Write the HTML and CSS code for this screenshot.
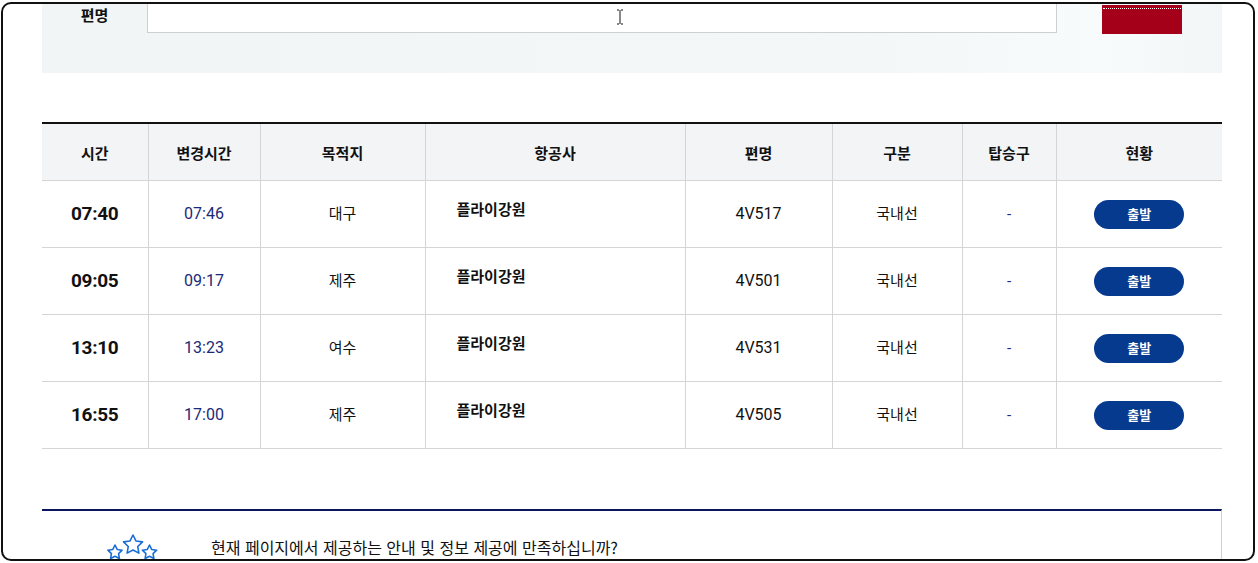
FILE: index.html
```html
<!DOCTYPE html>
<html lang="ko">

<head>
    <meta charset="UTF-8">
    <meta name="viewport" content="width=device-width, initial-scale=1.0">
    <title>출발 운항정보</title>
    <link rel="stylesheet" href="styles.css">
</head>

<body>

    <div class="frame">
        <div class="content">

            <!-- 검색 영역 -->
            <div class="search-box">
                <div class="search-row">
                    <label class="search-label" for="flight-no">편명</label>
                    <input type="text" id="flight-no" class="search-input">
                    <button class="search-btn" type="button"><span class="focus-line"></span></button>
                </div>
            </div>

            <!-- 운항 목록 -->
            <table class="flight-table">
                <colgroup>
                    <col style="width: 106px">
                    <col style="width: 112px">
                    <col style="width: 165px">
                    <col style="width: 260px">
                    <col style="width: 147px">
                    <col style="width: 130px">
                    <col style="width: 94px">
                    <col style="width: 166px">
                </colgroup>
                <thead>
                    <tr>
                        <th>시간</th>
                        <th>변경시간</th>
                        <th>목적지</th>
                        <th>항공사</th>
                        <th>편명</th>
                        <th>구분</th>
                        <th>탑승구</th>
                        <th>현황</th>
                    </tr>
                </thead>
                <tbody>
                    <tr>
                        <td class="time">07:40</td>
                        <td class="changed">07:46</td>
                        <td>대구</td>
                        <td class="airline"><span>플라이강원</span></td>
                        <td class="num">4V517</td>
                        <td>국내선</td>
                        <td class="gate">-</td>
                        <td><span class="status">출발</span></td>
                    </tr>
                    <tr>
                        <td class="time">09:05</td>
                        <td class="changed">09:17</td>
                        <td>제주</td>
                        <td class="airline"><span>플라이강원</span></td>
                        <td class="num">4V501</td>
                        <td>국내선</td>
                        <td class="gate">-</td>
                        <td><span class="status">출발</span></td>
                    </tr>
                    <tr>
                        <td class="time">13:10</td>
                        <td class="changed">13:23</td>
                        <td>여수</td>
                        <td class="airline"><span>플라이강원</span></td>
                        <td class="num">4V531</td>
                        <td>국내선</td>
                        <td class="gate">-</td>
                        <td><span class="status">출발</span></td>
                    </tr>
                    <tr>
                        <td class="time">16:55</td>
                        <td class="changed">17:00</td>
                        <td>제주</td>
                        <td class="airline"><span>플라이강원</span></td>
                        <td class="num">4V505</td>
                        <td>국내선</td>
                        <td class="gate">-</td>
                        <td><span class="status">출발</span></td>
                    </tr>
                </tbody>
            </table>

            <!-- 만족도 조사 -->
            <div class="survey">
                <svg class="survey-icon" width="54" height="28" viewBox="0 0 54 28">
                    <polygon points="27,2 29.94,7.95 36.51,8.91 31.76,13.55 32.88,20.09 27,17 21.12,20.09 22.24,13.55 17.49,8.91 24.06,7.95" />
                    <polygon points="9,12 11.2,16.47 16.13,17.18 12.57,20.66 13.41,25.57 9,23.25 4.59,25.57 5.43,20.66 1.87,17.18 6.8,16.47" />
                    <polygon points="43.5,12 45.7,16.47 50.63,17.18 47.07,20.66 47.91,25.57 43.5,23.25 39.09,25.57 39.93,20.66 36.37,17.18 41.3,16.47" />
                </svg>
                <p class="survey-text">현재 페이지에서 제공하는 안내 및 정보 제공에 만족하십니까?</p>
            </div>

        </div>

        <!-- 마우스 커서 -->
        <svg class="cursor" width="8" height="16" viewBox="0 0 8 16">
            <path d="M1 1h2M5 1h2M4 1v14M1 15h2M5 15h2" stroke="#111" stroke-width="1" fill="none" />
        </svg>
    </div>

</body>

</html>
```

FILE: styles.css
```css
/* Global Styles */
body {
    margin: 0;
    padding: 0;
    background-color: #fff;
    font-family: Roboto, "Noto Sans CJK KR", sans-serif;
    color: #111;
}

.frame {
    position: relative;
    box-sizing: border-box;
    width: 1254px;
    height: 559px;
    margin: 2px 0 0 1px;
    border: 2px solid #111;
    border-radius: 10px;
    overflow: hidden;
}

.content {
    padding-left: 39px;
    width: 1180px;
}

/* Search */
.search-box {
    height: 69px;
    background: linear-gradient(90deg, #f2f5f5 0%, #f4f7f7 70%, #f7fbfb 90%, #f3f6f6 100%);
}

.search-row {
    display: flex;
    align-items: flex-start;
    height: 29px;
}

.search-label {
    width: 105px;
    margin-top: 1px;
    text-align: center;
    font-family: "Noto Sans CJK KR", sans-serif;
    font-size: 15px;
    font-weight: 700;
    line-height: 20px;
    color: #111;
}

.search-input {
    box-sizing: border-box;
    width: 910px;
    height: 29px;
    margin: 0;
    padding: 0 10px;
    border: 1px solid #cfcfcf;
    border-top: none;
    background-color: #fff;
}

.search-btn {
    position: relative;
    width: 80px;
    height: 29px;
    margin: 1px 0 0 45px;
    padding: 0;
    border: none;
    background-color: #a50019;
}

.focus-line {
    position: absolute;
    top: 3px;
    left: 1px;
    right: 1px;
    border-top: 1px dotted #fff;
}

/* Table */
.flight-table {
    width: 1180px;
    margin-top: 49px;
    border-collapse: collapse;
    table-layout: fixed;
    border-top: 2px solid #111;
}

.flight-table th {
    height: 56px;
    padding: 0;
    background-color: #f3f4f6;
    font-family: "Noto Sans CJK KR", sans-serif;
    font-size: 15px;
    font-weight: 700;
    color: #111;
    border-bottom: 1px solid #d5d5d5;
    border-right: 1px solid #d5d5d5;
}

.flight-table td {
    height: 66px;
    padding: 0;
    text-align: center;
    font-size: 15px;
    line-height: 20px;
    color: #111;
    border-bottom: 1px solid #d5d5d5;
    border-right: 1px solid #d5d5d5;
}

.flight-table th:last-child,
.flight-table td:last-child {
    border-right: none;
}

.flight-table td.time {
    font-size: 19px;
    font-weight: 700;
    letter-spacing: -0.3px;
}

.flight-table td.changed {
    font-size: 16px;
    color: #1b2a78;
}

.flight-table td.airline {
    text-align: left;
    padding-left: 31px;
    font-weight: 700;
}

.airline span {
    display: block;
    margin-bottom: 8px;
}

.flight-table td.num {
    font-size: 16px;
}

.flight-table td.gate {
    color: #1b2a78;
}

.status {
    display: inline-block;
    vertical-align: middle;
    width: 90px;
    height: 29px;
    line-height: 28px;
    border-radius: 15px;
    background-color: #063a8e;
    color: #fff;
    font-family: "Noto Sans CJK KR", sans-serif;
    font-size: 13px;
    font-weight: 700;
}

/* Survey */
.survey {
    display: flex;
    align-items: flex-start;
    height: 80px;
    margin-top: 60px;
    border-top: 2px solid #0b1660;
    border-right: 1px solid #d0d0d0;
}

.survey-icon {
    margin: 22px 0 0 64px;
    fill: none;
    stroke: #1a6fd6;
    stroke-width: 1.6;
    stroke-linejoin: round;
}

.survey-text {
    margin: 25px 0 0 51px;
    font-family: "Noto Sans CJK KR", sans-serif;
    font-size: 16px;
    line-height: 22px;
    color: #111;
}

/* Cursor overlay */
.cursor {
    position: absolute;
    top: 5px;
    left: 613px;
}
```
